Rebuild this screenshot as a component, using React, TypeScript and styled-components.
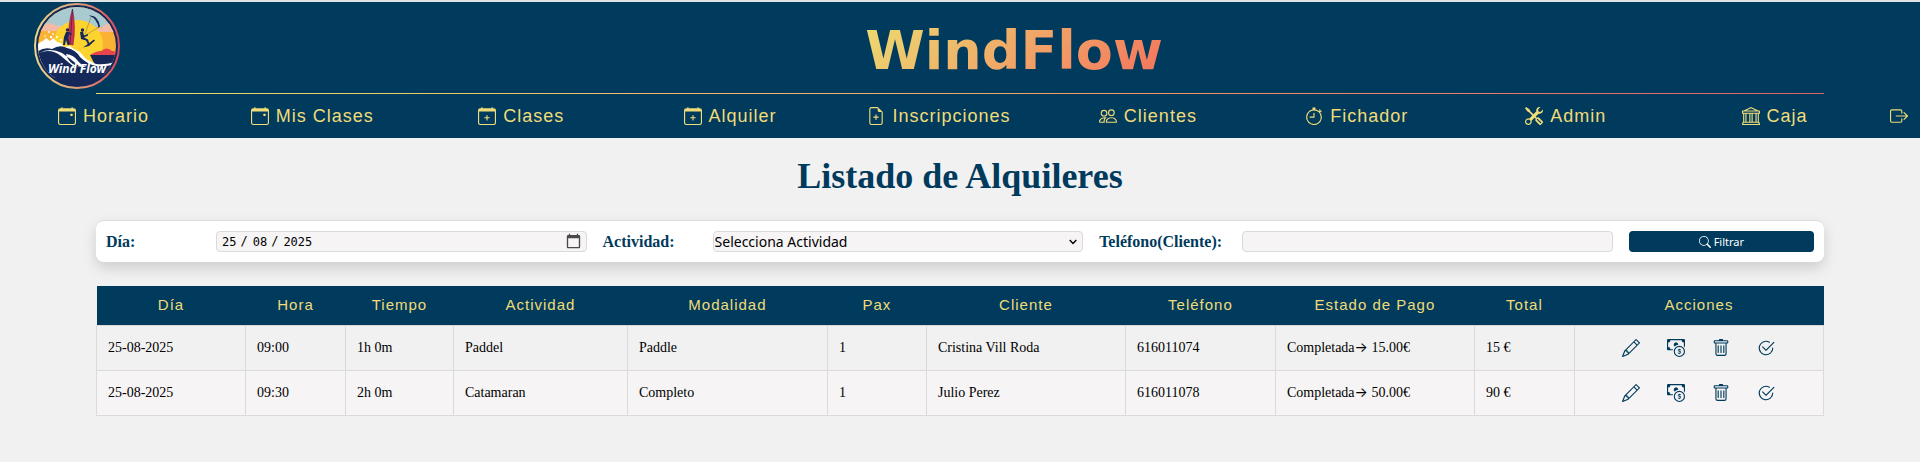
import React from "react";
import styled, { createGlobalStyle, css } from "styled-components";
import {
  BsCalendarEvent, BsCalendarPlus, BsFileEarmarkPlus, BsPeople, BsStopwatch, BsTools, BsBank,
  BsBoxArrowRight, BsPencil, BsCashCoin, BsTrash, BsCheck2Circle, BsSearch,
} from "react-icons/bs";

const navy = "#003a5c";
const sand = "#f0dc78";

const GlobalStyle = createGlobalStyle`
  * { box-sizing: border-box; }
  body {
    margin: 0;
    background: #f1f1f1;
    font-family: "Liberation Serif", serif;
    overflow-x: hidden;
  }
`;

const Header = styled.header`
  background: ${navy};
  border-top: 2px solid #dfe3e6;
`;

const Brand = styled.div`
  display: grid;
  grid-template-columns: 120px 1fr;
  align-items: start;
  padding: 1px 0 0 34px;
  height: 91px;
`;

const Logo = styled.svg`
  display: block;
  width: 86px;
  height: 86px;
`;

const BrandName = styled.h1`
  margin: 0;
  justify-self: center;
  padding: 8px 46px 0 0;
  font: bold 54px/80px "DejaVu Sans", sans-serif;

  span {
    background: linear-gradient(135deg, #ecdc70, #f0a868 50%, #f4725c);
    background-clip: text;
    color: transparent;
  }
`;

const Rule = styled.div`
  height: 1px;
  margin: 0 5%;
  background: linear-gradient(90deg, #ecdc70, #f0a868 50%, #e0606a);
`;

const Nav = styled.nav`
  display: grid;
  grid-template-columns: repeat(9, 1fr) 40px;
  align-items: center;
  height: 44px;
`;

const NavLink = styled.a`
  display: flex;
  justify-content: center;
  align-items: center;
  gap: 7px;
  padding-right: 2px;
  color: ${sand};
  font: 18px/24px "Liberation Sans", sans-serif;
  letter-spacing: 1px;
  text-decoration: none;
  white-space: nowrap;
`;

const Main = styled.main`
  padding: 16px 5% 46px;
`;

const Title = styled.h2`
  margin: 0 0 22px;
  color: ${navy};
  font-size: 36px;
  line-height: 44px;
  text-align: center;
`;

const Filters = styled.form`
  display: grid;
  grid-template-columns: 94px 2fr 94px 2fr 127px 2fr 1fr;
  column-gap: 16px;
  align-items: center;
  height: 42px;
  padding: 0 10px;
  background: #fff;
  border-top: 1px solid #dcdcdc;
  border-radius: 8px;
  box-shadow: 0 6px 14px rgba(0, 0, 0, 0.15);
`;

const Label = styled.label`
  color: ${navy};
  font-size: 16px;
  font-weight: bold;
`;

const field = css`
  width: 100%;
  min-width: 0;
  height: 21px;
  border: 1px solid #dadada;
  border-radius: 4px;
  background-color: #f6f4f5;
  color: #000;
`;

const DateInput = styled.input`
  ${field}
  padding: 0 4px;
  font: 12px/18px "DejaVu Sans Mono", monospace;

  /* Day first, then month, whatever the browser's locale */
  &::-webkit-datetime-edit-fields-wrapper {
    display: inline-grid;
    grid-template-columns: repeat(5, auto);
  }
  &::-webkit-datetime-edit-day-field { grid-area: 1 / 1; }
  &::-webkit-datetime-edit-month-field { grid-area: 1 / 3; }
  &::-webkit-datetime-edit-year-field { grid-area: 1 / 5; }
  &::-webkit-datetime-edit-text { padding: 0 4px 0 3px; }
  &::-webkit-calendar-picker-indicator {
    width: 17px;
    height: 17px;
    padding: 0;
    opacity: 0.7;
  }
`;

const TextInput = styled.input`
  ${field}
`;

const SelectBox = styled.div`
  position: relative;

  svg {
    position: absolute;
    top: 8px;
    right: 6px;
    pointer-events: none;
  }
`;

const Select = styled.select`
  ${field}
  display: block;
  appearance: none;
  padding: 0 20px 0 1px;
  font: 14px/18px "Noto Sans", sans-serif;
`;

const FilterButton = styled.button`
  display: flex;
  justify-content: center;
  align-items: center;
  gap: 3px;
  height: 21px;
  padding: 0;
  border: 0;
  border-radius: 4px;
  background: ${navy};
  color: #fff;
  font: 11px/20px "Noto Sans", sans-serif;
`;

const Table = styled.table`
  width: 100%;
  margin-top: 24px;
  border-collapse: collapse;
  table-layout: fixed;
`;

const Th = styled.th`
  height: 39px;
  padding: 0;
  background: ${navy};
  color: ${sand};
  font: 15px/20px "Liberation Sans", sans-serif;
  letter-spacing: 1px;
`;

const Row = styled.tr`
  &:nth-child(even) { background: #f6f4f5; }
`;

const Td = styled.td`
  height: 45px;
  padding: 0 11px;
  border: 1px solid #dadada;
  font-size: 14px;
  line-height: 20px;
  white-space: nowrap;
`;

const Arrow = styled.span`
  font: 14px/16px Inter, sans-serif;
`;

const Actions = styled.div`
  display: flex;
  justify-content: center;
  gap: 27px;
`;

const IconButton = styled.button`
  display: flex;
  padding: 0;
  border: 0;
  background: none;
  color: ${navy};
  font-size: 18px;
`;

const links = [
  { text: "Horario", Icon: BsCalendarEvent },
  { text: "Mis Clases", Icon: BsCalendarEvent },
  { text: "Clases", Icon: BsCalendarPlus },
  { text: "Alquiler", Icon: BsCalendarPlus },
  { text: "Inscripciones", Icon: BsFileEarmarkPlus },
  { text: "Clientes", Icon: BsPeople },
  { text: "Fichador", Icon: BsStopwatch },
  { text: "Admin", Icon: BsTools },
  { text: "Caja", Icon: BsBank },
];

const columns: [string, number][] = [
  ["Día", 149], ["Hora", 100], ["Tiempo", 108], ["Actividad", 174], ["Modalidad", 200], ["Pax", 99],
  ["Cliente", 199], ["Teléfono", 150], ["Estado de Pago", 199], ["Total", 100], ["Acciones", 249],
];

const paid = (amount: string) => <>Completada<Arrow>→</Arrow> {amount}</>;

const rentals: React.ReactNode[][] = [
  ["25-08-2025", "09:00", "1h 0m", "Paddel", "Paddle", "1", "Cristina Vill Roda", "616011074", paid("15.00€"), "15 €"],
  ["25-08-2025", "09:30", "2h 0m", "Catamaran", "Completo", "1", "Julio Perez", "616011078", paid("50.00€"), "90 €"],
];

const actions = [
  { name: "Editar", Icon: BsPencil },
  { name: "Cobrar", Icon: BsCashCoin },
  { name: "Eliminar", Icon: BsTrash },
  { name: "Finalizar", Icon: BsCheck2Circle },
];

const WindFlowLogo = () => (
  <Logo viewBox="0 0 86 86" role="img" aria-label="WindFlow">
    <defs>
      <linearGradient id="ring"><stop offset="0" stopColor="#e8d58a" /><stop offset=".5" stopColor="#e0a078" /><stop offset="1" stopColor="#d9485f" /></linearGradient>
      <clipPath id="disc"><circle cx="43" cy="43" r="39" /></clipPath>
    </defs>
    <circle cx="43" cy="43" r="42" fill="#14295a" stroke="url(#ring)" strokeWidth="2" />
    <g clipPath="url(#disc)">
      <path d="M0 0h86v60H0z" fill="#f9b233" />
      <path d="M0 0h86v24H0z" fill="#a9cbd0" />
      <path d="M0 28q4-6 10-5 5-6 12 0 6-2 9 5zM86 29H60q3-6 8-4 4-7 18-3z" fill="#f3bba5" />
      <circle cx="44" cy="42" r="25" fill="#fdd32f" />
      <path d="M86 52H56q6-4 11-4 6-5 11 0l8 1z" fill="#e9444a" />
      <path d="M56 52h30v12H62z" fill="#14295a" />
      <path d="M0 47q4-8 9-9l3-3 4 3 3-3 4 4 4 1 3 4 6-1 4 3 6 3 6 7 10 5q12 1 20-3l-4 9-16 8H0z" fill="#fff" />
      <path d="M0 52q8-9 18-6 8-5 15-1 9 2 13 9 7 7 16 9 9 1 20-2v25H0z" fill="#14295a" />
      <path d="M5 50q12-5 22 3 7 6 12 10h6q-8-7-17-13Q16 44 5 50zM32 51q8 1 12 7 4 5 9 6-17 1-21-13z" fill="#fff" />
      <path d="M38.500 6q-5 16-3.500 35l4 1q3-18-.5-36z" fill="#d82f4e" stroke="#7c1c3c" strokeWidth=".6" />
      <path d="M38.500 6L36 42" stroke="#14295a" strokeWidth=".7" />
      <circle cx="33.500" cy="27" r="1.700" fill="#14295a" />
      <path d="M32 29l3 0 3 2-1 1-2-1-.5 4 1 7h-2l-1.500-5-1 5h-2l1-8z" fill="#14295a" />
      <path d="M55 12.500q9-1 11 11l-1.500 1.500q-1-9-9.500-12.500z" fill="#14295a" />
      <path d="M57 14l-6 17M65 24L52 32" stroke="#806b42" strokeWidth=".5" />
      <circle cx="48.500" cy="27" r="1.700" fill="#14295a" />
      <path d="M46 29l3-.5 1 4 4-1.500v1.500l-4 2 4 2 1.500 4.500-1.500.5-2-4-5-1.500z" fill="#14295a" />
      <path d="M49 44.500l11-8 1 1-6 5.500z" fill="#14295a" />
      <g fill="#fff"><circle cx="11" cy="33" r=".8" /><circle cx="15" cy="29" r=".9" /><circle cx="19" cy="31" r=".9" /><circle cx="23" cy="34" r="1" /><circle cx="27" cy="37" r=".9" /><circle cx="17" cy="34" r="1.200" /></g>
    </g>
    <text x="14" y="70" fill="#fff" fontFamily="Noto Sans, sans-serif" fontSize="12" fontWeight="bold" fontStyle="italic">Wind Flow</text>
  </Logo>
);

export default function App() {
  return (
    <>
      <GlobalStyle />
      <Header>
        <Brand>
          <WindFlowLogo />
          <BrandName><span>WindFlow</span></BrandName>
        </Brand>
        <Rule />
        <Nav>
          {links.map(({ text, Icon }) => (
            <NavLink href="#" key={text}><Icon />{text}</NavLink>
          ))}
          <NavLink href="#" aria-label="Salir"><BsBoxArrowRight /></NavLink>
        </Nav>
      </Header>
      <Main>
        <Title>Listado de Alquileres</Title>
        <Filters onSubmit={(e) => e.preventDefault()}>
          <Label htmlFor="dia">Día:</Label>
          <DateInput id="dia" type="date" defaultValue="2025-08-25" />
          <Label htmlFor="actividad">Actividad:</Label>
          <SelectBox>
            <Select id="actividad"><option>Selecciona Actividad</option></Select>
            <svg width="8" height="6" viewBox="0 0 8 6" aria-hidden="true">
              <path d="M.7 1L4 4.500 7.300 1" fill="none" stroke="#000" strokeWidth="1.400" />
            </svg>
          </SelectBox>
          <Label htmlFor="telefono">Teléfono(Cliente):</Label>
          <TextInput id="telefono" type="tel" />
          <FilterButton type="submit"><BsSearch size={12} />Filtrar</FilterButton>
        </Filters>
        <Table>
          <colgroup>
            {columns.map(([name, share]) => (
              <col key={name} style={{ width: `${(share / 1727) * 100}%` }} />
            ))}
          </colgroup>
          <thead>
            <tr>{columns.map(([name]) => <Th key={name} scope="col">{name}</Th>)}</tr>
          </thead>
          <tbody>
            {rentals.map((cells, n) => (
              <Row key={n}>
                {cells.map((cell, i) => <Td key={i}>{cell}</Td>)}
                <Td>
                  <Actions>
                    {actions.map(({ name, Icon }) => (
                      <IconButton key={name} type="button" aria-label={name}><Icon /></IconButton>
                    ))}
                  </Actions>
                </Td>
              </Row>
            ))}
          </tbody>
        </Table>
      </Main>
    </>
  );
}
